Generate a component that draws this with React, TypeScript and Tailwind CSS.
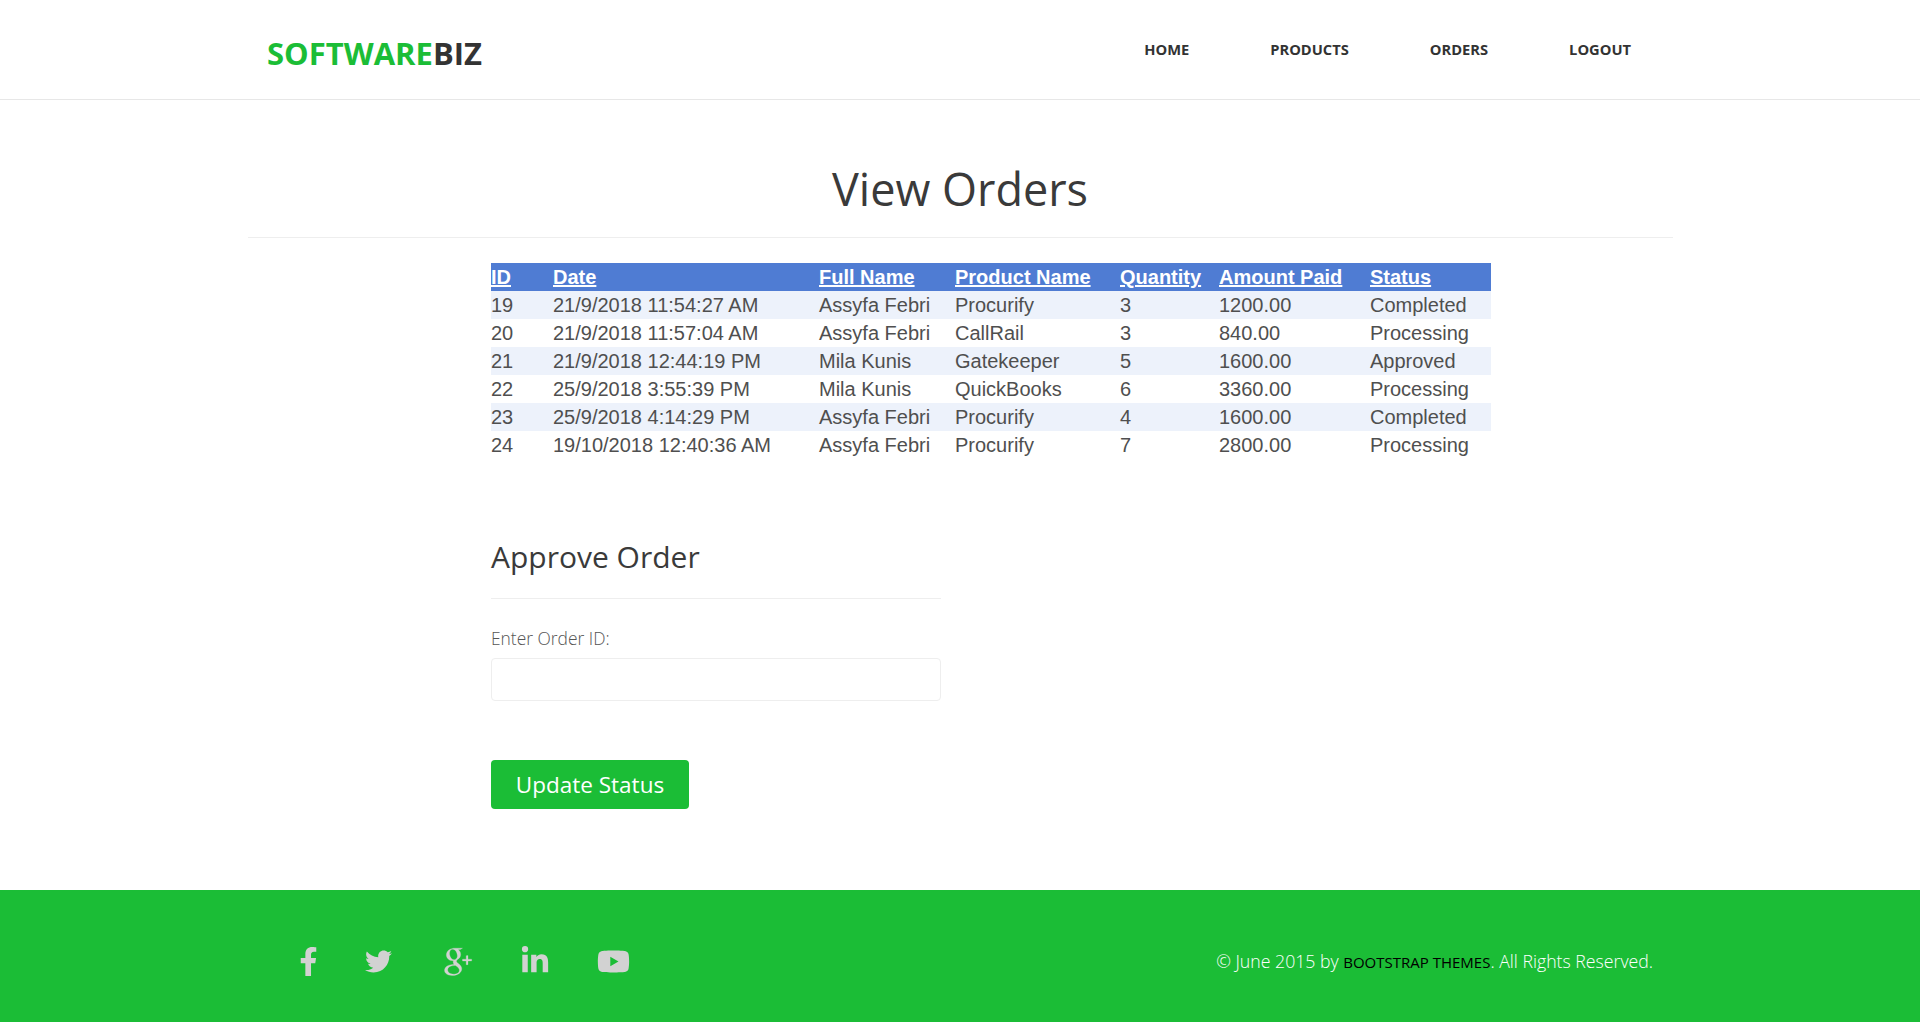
import React from 'react';
import { FaFacebookF, FaTwitter, FaLinkedinIn, FaYoutube } from 'react-icons/fa';
import { TiSocialGooglePlus } from 'react-icons/ti';

const navLinks = ['HOME', 'PRODUCTS', 'ORDERS', 'LOGOUT'];

const orders = [
  ['19', '21/9/2018 11:54:27 AM', 'Assyfa Febri', 'Procurify', '3', '1200.00', 'Completed'],
  ['20', '21/9/2018 11:57:04 AM', 'Assyfa Febri', 'CallRail', '3', '840.00', 'Processing'],
  ['21', '21/9/2018 12:44:19 PM', 'Mila Kunis', 'Gatekeeper', '5', '1600.00', 'Approved'],
  ['22', '25/9/2018 3:55:39 PM', 'Mila Kunis', 'QuickBooks', '6', '3360.00', 'Processing'],
  ['23', '25/9/2018 4:14:29 PM', 'Assyfa Febri', 'Procurify', '4', '1600.00', 'Completed'],
  ['24', '19/10/2018 12:40:36 AM', 'Assyfa Febri', 'Procurify', '7', '2800.00', 'Processing'],
];

const columns = [
  { label: 'ID', width: 'w-[62px]' },
  { label: 'Date', width: 'w-[266px]' },
  { label: 'Full Name', width: 'w-[136px]' },
  { label: 'Product Name', width: 'w-[165px]' },
  { label: 'Quantity', width: 'w-[99px]' },
  { label: 'Amount Paid', width: 'w-[151px]' },
  { label: 'Status', width: 'w-[121px]' },
];

const App = () => {
  return (
    <div className="min-h-[1022px] flex flex-col bg-white font-['Open_Sans',sans-serif] text-[#333]">
      <header className="h-[100px] border-b border-[#e7e7e7] pl-[267px] pr-[289px] flex items-center justify-between">
        <div className="text-[31px] font-bold leading-none pt-[8px]">
          <span className="text-[#1bbd36]">SOFTWARE</span>
          <span className="text-[#333]">BIZ</span>
        </div>
        <nav className="flex gap-[81px] text-[14.7px] font-bold pb-[1px]">
          {navLinks.map((link) => (
            <a key={link} className="text-[#333]">{link}</a>
          ))}
        </nav>
      </header>

      <main className="flex-1 flex flex-col">
        <h1 className="text-center text-[45px] leading-[50px] pt-[64px] pb-[23px] text-[#3a3a3a]">View Orders</h1>
        <hr className="w-[1425px] mx-auto border-[#eee]" />

        <div className="w-[1000px] ml-[491px] mt-[25px]">
          <table className="w-[1000px] table-fixed border-collapse font-['Liberation_Sans',sans-serif] text-[20px] leading-[28px] text-[#4f4f4f]">
            <thead>
              <tr className="bg-[#4f7cd3] text-white">
                {columns.map((col) => (
                  <th key={col.label} className={`${col.width} p-0 text-left font-bold underline`}>{col.label}</th>
                ))}
              </tr>
            </thead>
            <tbody>
              {orders.map((row, i) => (
                <tr key={row[0]} className={i % 2 === 0 ? 'bg-[#edf2fb]' : 'bg-white'}>
                  {row.map((cell, j) => (
                    <td key={j} className="p-0 whitespace-nowrap">{cell}</td>
                  ))}
                </tr>
              ))}
            </tbody>
          </table>

          <div className="w-[450px] mt-[78px]">
            <h2 className="text-[30px] leading-[40px] pb-[21px] border-b border-[#eee] text-[#3a3a3a]">Approve Order</h2>
            <label className="block mt-[27px] text-[17.4px] leading-[24px] font-light text-[#555]">Enter Order ID:</label>
            <input className="block w-full h-[43px] mt-[8px] border border-[#eee] rounded-[4px] bg-white" />
            <button className="block mt-[59px] w-[198px] h-[49px] rounded-[4px] bg-[#1bbd36] text-white text-[22.5px]">Update Status</button>
          </div>
        </div>
      </main>

      <footer className="h-[132px] bg-[#1bbd36] pl-[301px] pr-[267px] pt-[10px] flex items-center justify-between">
        <div className="flex items-center gap-[50px] text-[#d2d2d2]">
          <span className="w-[14px] flex justify-center"><FaFacebookF size={29} className="shrink-0" /></span>
          <span className="w-[27px] flex justify-center"><FaTwitter size={27} className="shrink-0" /></span>
          <span className="w-[29px] h-[30px] flex justify-center items-center"><TiSocialGooglePlus size={44} stroke="currentColor" strokeWidth={0.15} className="shrink-0" /></span>
          <span className="w-[27px] flex justify-center"><FaLinkedinIn size={30} className="shrink-0" /></span>
          <span className="w-[31px] flex justify-center"><FaYoutube size={33} className="shrink-0" /></span>
        </div>
        <p className="text-[17.7px] font-light text-white">
          © June 2015 by <a className="font-normal text-[15px] text-black">BOOTSTRAP THEMES</a>. All Rights Reserved.
        </p>
      </footer>
    </div>
  );
};

export default App;
